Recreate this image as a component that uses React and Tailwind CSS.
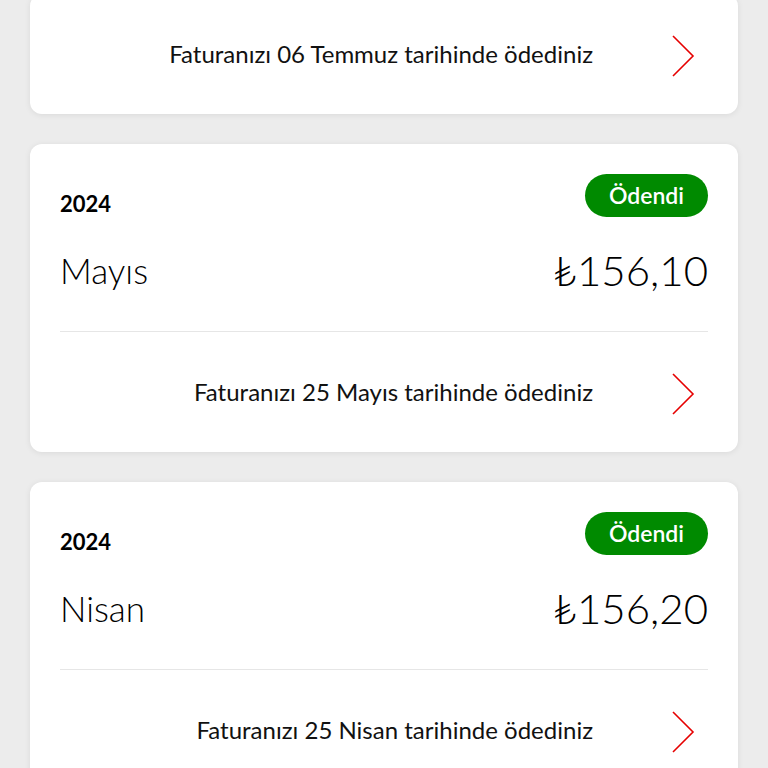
const bills = [
  { year: null, month: null, amount: null, paidOn: "06 Temmuz", partial: true },
  { year: "2024", month: "Mayıs", amount: "156,10", paidOn: "25 Mayıs" },
  { year: "2024", month: "Nisan", amount: "156,20", paidOn: "25 Nisan" },
];

function Chevron() {
  return (
    <svg width="24" height="44" viewBox="0 0 24 44" fill="none" aria-hidden="true">
      <path d="M2 2 L22 22 L2 42" stroke="#e60000" strokeWidth="1.6" strokeLinejoin="miter" />
    </svg>
  );
}

function BillCard({ bill }) {
  return (
    <div className="bg-white rounded-xl shadow-[0_1px_6px_rgba(0,0,0,0.08)] px-[30px]">
      {!bill.partial && (
        <>
          <div className="pt-[30px] flex items-end justify-between">
            <span className="text-[22px] font-bold leading-none mb-[2px] text-black">{bill.year}</span>
            <span className="bg-[#008a00] text-white text-[23px] font-semibold leading-none rounded-full px-[24px] h-[43px] flex items-center">
              Ödendi
            </span>
          </div>
          <div className="mt-[18px] flex items-center justify-between h-[70px]">
            <span className="text-[35px] font-light leading-none text-black">{bill.month}</span>
            <span className="text-[42px] font-light leading-none text-black">₺{bill.amount}</span>
          </div>
          <div className="mt-[26px] border-t border-[#e6e6e6]" />
        </>
      )}
      <div className="h-[120px] flex items-center justify-end">
        <span className="text-[24px] text-[#111]">Faturanızı {bill.paidOn} tarihinde ödediniz</span>
        <span className="ml-[78px] mr-[13px] mt-[4px] flex">
          <Chevron />
        </span>
      </div>
    </div>
  );
}

export default function App() {
  return (
    <div className="h-[768px] overflow-hidden bg-[#ececec] font-['Lato','Noto_Sans',sans-serif]">
      <div className="-mt-[6px] px-[30px] flex flex-col gap-[30px]">
        {bills.map((b, i) => (
          <BillCard key={i} bill={b} />
        ))}
      </div>
    </div>
  );
}
